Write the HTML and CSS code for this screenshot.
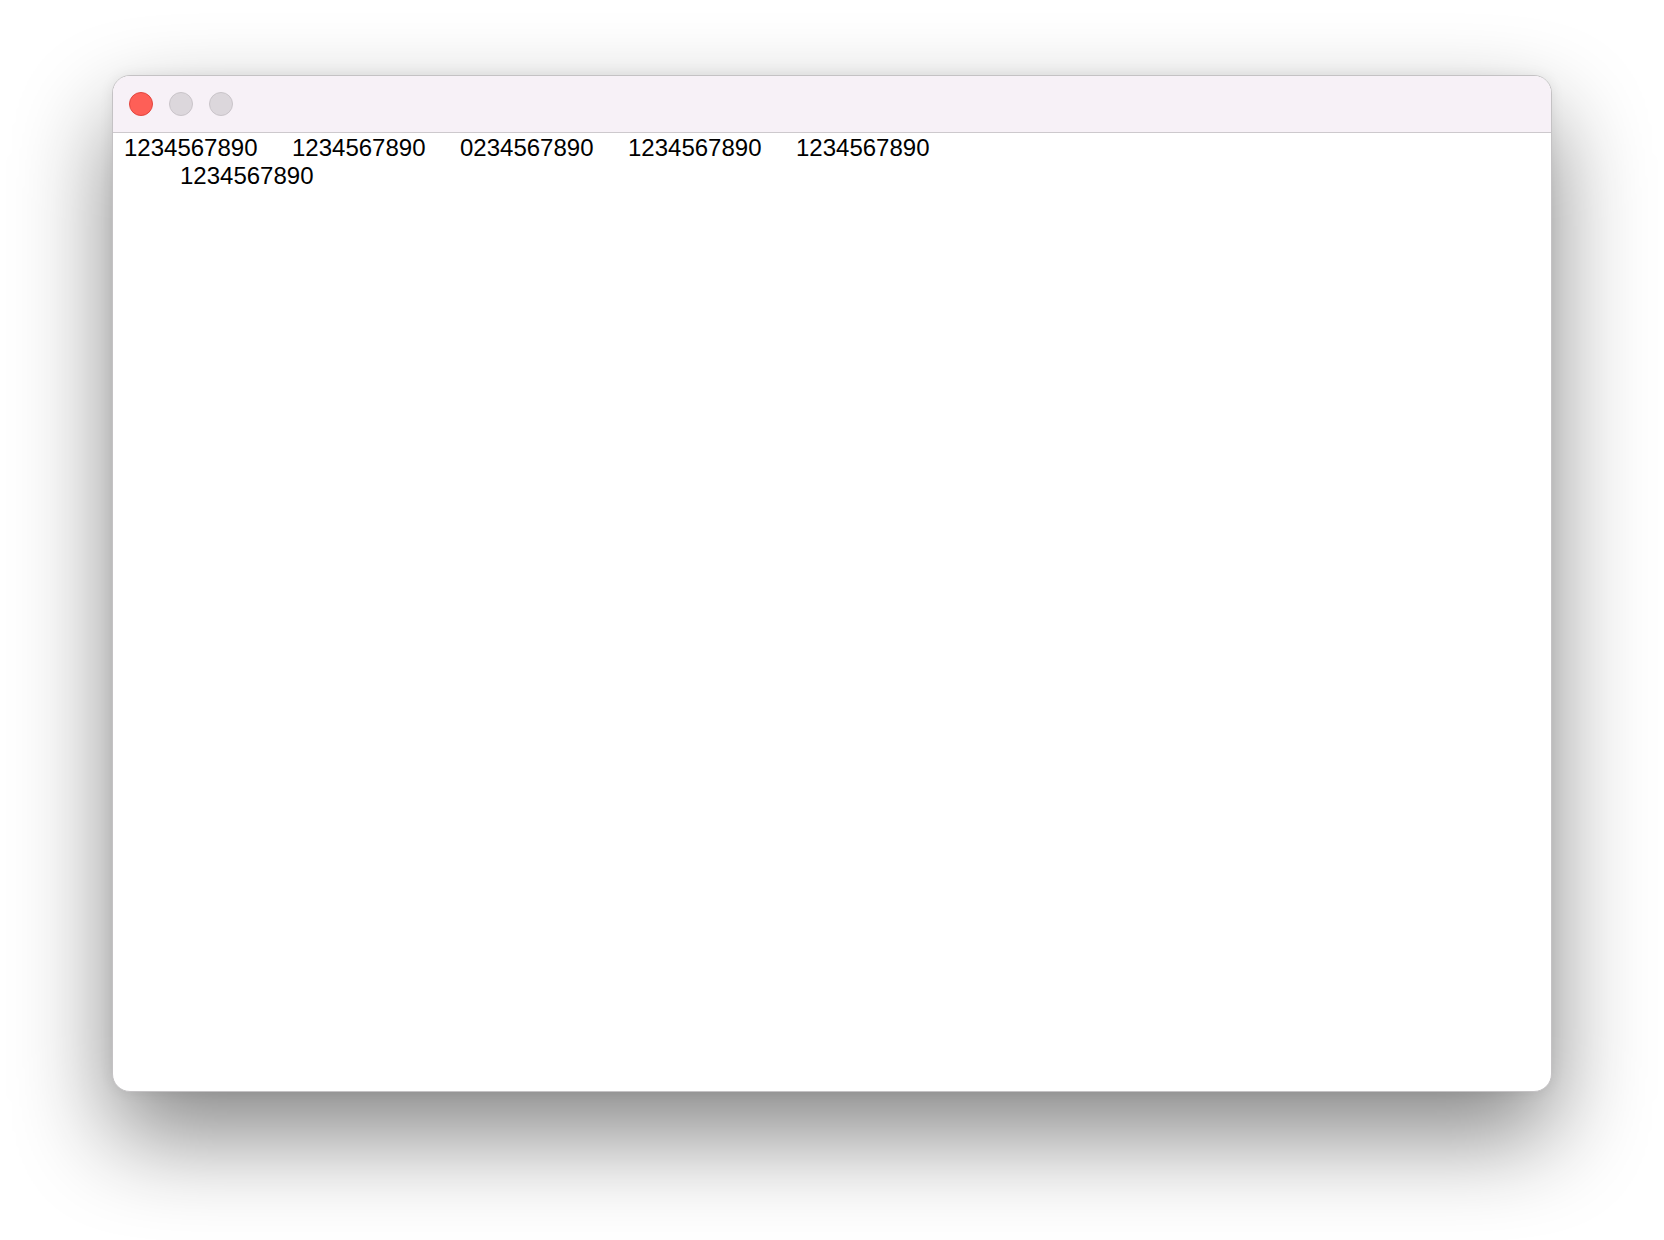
FILE: index.html
```html
<!DOCTYPE html>
<html lang="en">
<head>
	<meta charset="UTF-8">
	<title>Tabs</title>
	<link rel="stylesheet" href="styles.css">
</head>
<body>
	<div class="window">
		<div class="titlebar">
			<span class="light close"></span>
			<span class="light"></span>
			<span class="light"></span>
		</div>
		<div class="content">
<pre class="text">1234567890	1234567890	0234567890	1234567890	1234567890
	1234567890</pre>
		</div>
	</div>
</body>
</html>
```

FILE: styles.css
```css
html, body{
	margin: 0;
	background: #fff;
}
body{
	min-height: 100vh;
	box-sizing: border-box;
	padding: 75px 0 0 112px;
}
.window{
	width: 1440px;
	height: 1017px;
	box-sizing: border-box;
	border: 1px solid #c4c2c4;
	border-radius: 18px;
	background: #fff;
	overflow: hidden;
	box-shadow: 0 44px 96px rgba(0,0,0,0.48), 0 0 14px rgba(0,0,0,0.07);
	display: flex;
	flex-direction: column;
}
.titlebar{
	height: 56px;
	flex-shrink: 0;
	background: #f7f1f7;
	border-bottom: 1px solid #cdc9cd;
	display: flex;
	align-items: center;
	gap: 16px;
	padding-left: 16px;
}
.light{
	width: 22px;
	height: 22px;
	border-radius: 50%;
	background: #dcd7dc;
	border: 1px solid #c9c4c9;
}
.light.close{
	background: #fe5f57;
	border-color: #e2463f;
}
.content{
	flex: 1;
	padding: 1px 11px;
}
/* tab stops every 56px */
.text{
	margin: 0;
	font-family: "Liberation Sans", Arial, sans-serif;
	font-size: 24px;
	line-height: 27.6px;
	color: #000;
	tab-size: 56px;
	white-space: pre;
}
```
